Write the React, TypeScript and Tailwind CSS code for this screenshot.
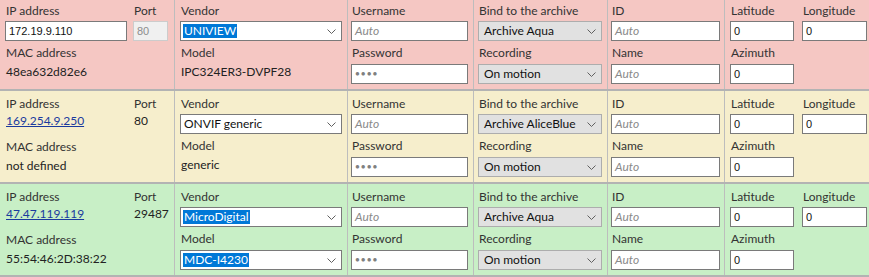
import React from 'react';

type Row = {
  bg: string;
  ip: string;
  ipLink: boolean;
  port: string;
  mac: string;
  vendor: string;
  vendorHi: boolean;
  model: string;
  modelCombo: boolean;
  archive: string;
};

const rows: Row[] = [
  { bg: 'bg-[#f5c7c3]', ip: '172.19.9.110', ipLink: false, port: '80', mac: '48ea632d82e6', vendor: 'UNIVIEW', vendorHi: true, model: 'IPC324ER3-DVPF28', modelCombo: false, archive: 'Archive Aqua' },
  { bg: 'bg-[#f6eecc]', ip: '169.254.9.250', ipLink: true, port: '80', mac: 'not defined', vendor: 'ONVIF generic', vendorHi: false, model: 'generic', modelCombo: false, archive: 'Archive AliceBlue' },
  { bg: 'bg-[#c8efc6]', ip: '47.47.119.119', ipLink: true, port: '29487', mac: '55:54:46:2D:38:22', vendor: 'MicroDigital', vendorHi: true, model: 'MDC-I4230', modelCombo: true, archive: 'Archive Aqua' },
];

const Label = ({ children, className = '' }: { children: React.ReactNode; className?: string }) => (
  <div className={`h-4 pl-[1px] text-[12px] leading-4 text-[#333] whitespace-nowrap ${className}`}>{children}</div>
);

const TextBox = ({ value, placeholder, w, password, disabled }: { value?: string; placeholder?: string; w: string; password?: boolean; disabled?: boolean }) => (
  <div
    className={`${w} h-5 flex items-center px-[3px] border text-[11px] font-['Liberation_Sans',sans-serif] ${
      disabled ? 'bg-[#f0f0f0] border-[#cccccc] text-[#8d8d8d]' : 'bg-white border-[#7a7a7a] text-[#111]'
    }`}
  >
    {password ? (
      <span className="text-[8px] tracking-[1px] text-[#808080]">●●●●</span>
    ) : value ? (
      <span>{value}</span>
    ) : (
      <span className="italic text-[#8a8a8a] font-['Lato',sans-serif] text-[12px]">{placeholder}</span>
    )}
  </div>
);

const Chevron = () => (
  <svg width="9" height="5" viewBox="0 0 9 5" className="flex-none">
    <polyline points="0.5,0.5 4.5,4.5 8.5,0.5" fill="none" stroke="#606060" strokeWidth="1" />
  </svg>
);

const Combo = ({ value, w, gray, hi }: { value: string; w: string; gray?: boolean; hi?: boolean }) => (
  <div
    className={`${w} h-5 flex items-center justify-between pl-[2px] pr-[5px] border text-[12px] ${
      gray ? 'bg-[#e1e1e1] border-[#adadad]' : 'bg-white border-[#7a7a7a]'
    }`}
  >
    <span className={`px-[1px] leading-[14px] ${hi ? 'bg-[#0078d7] text-white' : 'text-[#111]'} ${gray ? 'pl-[3px]' : ''}`}>{value}</span>
    <Chevron />
  </div>
);

const Cell = ({ w, pl, children }: { w: string; pl: string; children: React.ReactNode }) => (
  <div className={`${w} ${pl} flex-none border-r border-[#bdbdbd] pt-[5px] flex flex-col`}>{children}</div>
);

const CameraRow = ({ r }: { r: Row }) => (
  <div className={`${r.bg} h-[93px] border-b-2 border-[#b3b3b3] flex`}>
    {/* address */}
    <Cell w="w-[175px]" pl="pl-[5px]">
      <div className="flex gap-[6px]">
        <div className="w-[122px]">
          <Label>IP address</Label>
          {r.ipLink ? (
            <div className="mt-[1px] pl-[1px] text-[12px] leading-4 text-[#1a3a9e] underline">{r.ip}</div>
          ) : (
            <div className="mt-[2px]">
              <TextBox value={r.ip} w="w-[122px]" />
            </div>
          )}
        </div>
        <div className="w-[35px]">
          <Label>Port</Label>
          {r.ipLink ? (
            <div className="mt-[1px] pl-[1px] text-[12px] leading-4 text-[#222]">{r.port}</div>
          ) : (
            <div className="mt-[2px]">
              <TextBox value={r.port} w="w-[35px]" disabled />
            </div>
          )}
        </div>
      </div>
      <Label className={r.ipLink ? 'mt-[10px]' : 'mt-[4px]'}>MAC address</Label>
      <div className="mt-[3px] pl-[1px] text-[12px] leading-4 text-[#222]">{r.mac}</div>
    </Cell>

    {/* vendor / model */}
    <Cell w="w-[173px]" pl="pl-[5px]">
      <Label>Vendor</Label>
      <div className="mt-[2px]">
        <Combo value={r.vendor} w="w-[162px]" hi={r.vendorHi} />
      </div>
      <Label className="mt-[4px]">Model</Label>
      {r.modelCombo ? (
        <div className="mt-[3px]">
          <Combo value={r.model} w="w-[162px]" hi />
        </div>
      ) : (
        <div className="mt-[3px] pl-[1px] text-[12px] leading-4 text-[#222]">{r.model}</div>
      )}
    </Cell>

    {/* credentials */}
    <Cell w="w-[126px]" pl="pl-[3px]">
      <Label>Username</Label>
      <div className="mt-[2px]">
        <TextBox placeholder="Auto" w="w-[117px]" />
      </div>
      <Label className="mt-[4px]">Password</Label>
      <div className="mt-[3px]">
        <TextBox password w="w-[117px]" />
      </div>
    </Cell>

    {/* archive */}
    <Cell w="w-[134px]" pl="pl-[4px]">
      <Label>Bind to the archive</Label>
      <div className="mt-[2px]">
        <Combo value={r.archive} w="w-[124px]" gray />
      </div>
      <Label className="mt-[4px]">Recording</Label>
      <div className="mt-[3px]">
        <Combo value="On motion" w="w-[124px]" gray />
      </div>
    </Cell>

    {/* id / name */}
    <Cell w="w-[117px]" pl="pl-[3px]">
      <Label>ID</Label>
      <div className="mt-[2px]">
        <TextBox placeholder="Auto" w="w-[109px]" />
      </div>
      <Label className="mt-[4px]">Name</Label>
      <div className="mt-[3px]">
        <TextBox placeholder="Auto" w="w-[109px]" />
      </div>
    </Cell>

    {/* geo */}
    <div className="flex-1 pl-[5px] pt-[5px] flex flex-col">
      <div className="flex gap-[8px]">
        <div>
          <Label>Latitude</Label>
          <div className="mt-[2px]">
            <TextBox value="0" w="w-[64px]" />
          </div>
        </div>
        <div>
          <Label>Longitude</Label>
          <div className="mt-[2px]">
            <TextBox value="0" w="w-[65px]" />
          </div>
        </div>
      </div>
      <Label className="mt-[4px]">Azimuth</Label>
      <div className="mt-[3px]">
        <TextBox value="0" w="w-[64px]" />
      </div>
    </div>
  </div>
);

export default function App() {
  return (
    <div className="w-[869px] h-[277px] overflow-hidden bg-[#f0f0f0] font-['Lato',sans-serif]">
      <div className="-mt-[2px]">
        {rows.map((r, i) => (
          <CameraRow key={i} r={r} />
        ))}
      </div>
    </div>
  );
}
